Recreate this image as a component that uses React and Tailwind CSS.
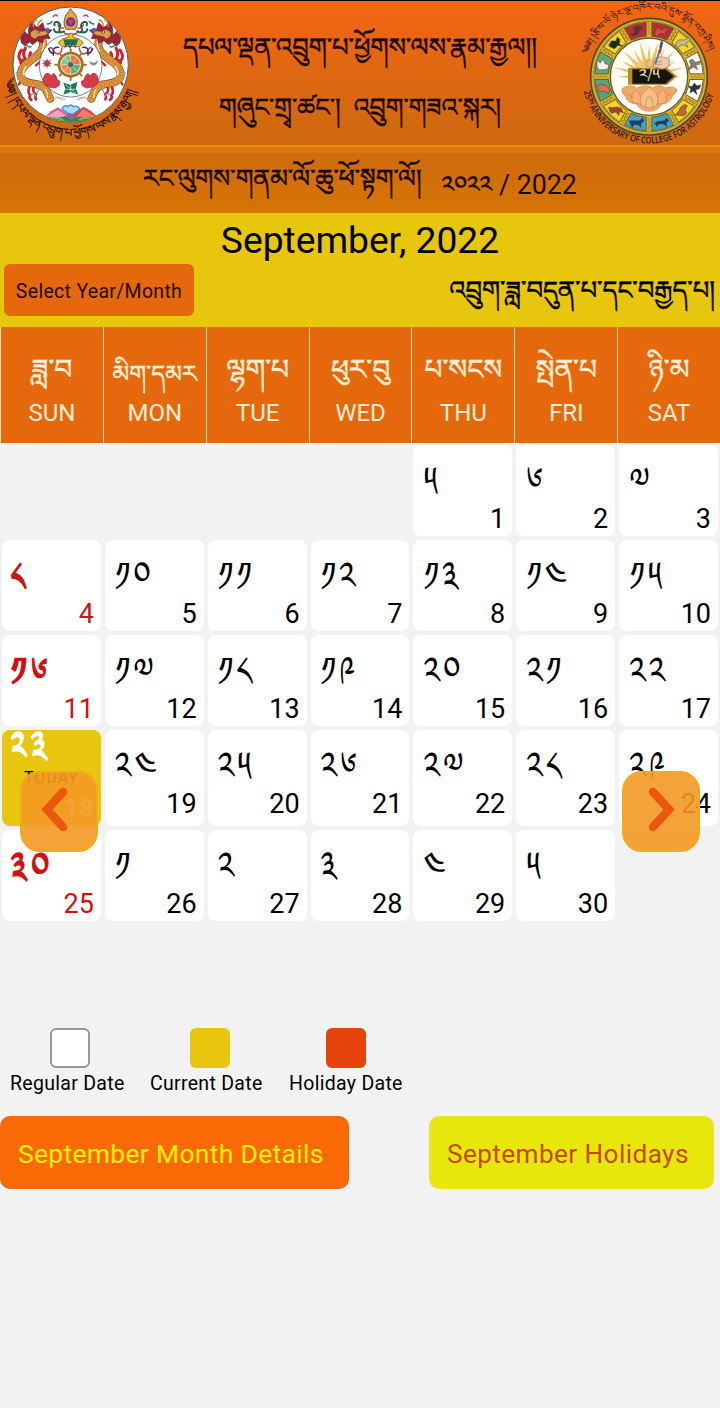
import React from "react";

const TIB = "font-['Noto_Serif_Tibetan','Noto_Sans_Tibetan','Jomolhari','DDC_Uchen','Roboto',serif]";

const WEEKDAYS = [
  ["ཟླ་བ", "SUN"],
  ["མིག་དམར", "MON"],
  ["ལྷག་པ", "TUE"],
  ["ཕུར་བུ", "WED"],
  ["པ་སངས", "THU"],
  ["སྤེན་པ", "FRI"],
  ["ཉི་མ", "SAT"],
];

const LUNAR = [
  "༥", "༦", "༧",
  "༨", "༡༠", "༡༡", "༡༢", "༡༣", "༡༤", "༡༥",
  "༡༦", "༡༧", "༡༨", "༡༩", "༢༠", "༢༡", "༢༢",
  "༢༣", "༢༤", "༢༥", "༢༦", "༢༧", "༢༨", "༢༩",
  "༣༠", "༡", "༢", "༣", "༤", "༥",
];

const DRAGON_BODY = "M118 104C136 126 130 150 112 166C90 184 66 196 62 218C58 244 86 250 106 252C130 254 140 270 150 296";

function Dragon() {
  return (
    <g fill="none" strokeLinecap="round" strokeLinejoin="round">
      <path d="M64 150q-14 20-2 32M76 144q-10 18 0 34q-20 6-12 12M92 158q-8 12 4 20" stroke="#d3222c" strokeWidth="9" />
      <path d="M108 196l16-14M128 150q18 8 10 30M66 240l-10 14" stroke="#d3222c" strokeWidth="7" />
      <path d={DRAGON_BODY} stroke="#8f4a1c" strokeWidth="24" />
      <path d={DRAGON_BODY} stroke="#e0973a" strokeWidth="20" />
      <path d={DRAGON_BODY} stroke="#b4672a" strokeWidth="15" strokeDasharray="1.5 6" strokeLinecap="butt" />
      <path d="M128 116q8 20-2 36M78 200q-10 12-6 24" stroke="#f5e2b4" strokeWidth="5" />
      <path d="M64 128q-6-24 8-40q4 14 14 16q-4-28 14-40q2 16 14 18l14-14 6 20 22 2-12 12 6 14-18-2-4 16-16-8-14 12-10-8-12 12z" fill="#9d2434" stroke="#6f1823" strokeWidth="2" />
      <path d="M92 96l14-8 16 6 18-2 4 9-12 6-16 2-12 8-12-8z" fill="#dba047" stroke="#7b3b1c" strokeWidth="2" />
      <path d="M100 80q-2-16 10-20M114 78q0-14 12-18" stroke="#d98c28" strokeWidth="4" />
      <circle cx="114" cy="96" r="4" fill="#fff" stroke="#222" strokeWidth="2" />
      <circle cx="142" cy="90" r="7" fill="#3c6fc4" />
      <path d="M142 72q10 0 14-8M78 130q4 14 16 10" stroke="#2d7a5a" strokeWidth="4" />
      <path d="M88 262q-6 14 2 24q-4 8 4 14M100 264q-2 14 8 18q-4 10 0 16" stroke="#d3222c" strokeWidth="8" />
      <path d="M94 284q10-8 14 4M120 260l-8 18M58 214l-10 6" stroke="#7aa5b5" strokeWidth="4" />
      <path d="M136 268q8 12 6 24" stroke="#f5e2b4" strokeWidth="4" />
    </g>
  );
}

function Scarf() {
  return (
    <g fill="none" strokeLinecap="round">
      <path d="M192 94q-16 8-14-6q8-16-6-22q-12-2-8 10M182 96q-20 4-20-8" stroke="#16684c" strokeWidth="6" />
      <path d="M190 84q-14 2-16-10M172 48q-8-8-12 2" stroke="#c92b3a" strokeWidth="4" />
      <path d="M186 144q-2 18-14 18q-12-4-14-16q-6-6-10 0q2 14 12 12" stroke="#c73148" strokeWidth="4" />
      <path d="M176 142q-14-2-16 10v14M146 146q6 16 16 14" stroke="#263878" strokeWidth="4" />
      <path d="M160 298q14-10 30-4M168 290l20 10q6 2 8-4" stroke="#a5a5a5" strokeWidth="2.5" />
    </g>
  );
}

function Rabbit() {
  return <path d="M132 228q4-10 14-8l8 8 6-8 8 8 4 12 8 4-2 12-12 8-18-2-12-6-8-12z" fill="#d93a4a" stroke="#a41d36" strokeWidth="2" />;
}

function DrukEmblem() {
  return (
    <svg viewBox="0 0 450 450" className="h-[150px] w-[150px] shrink-0">
      <defs>
        <path id="druk-arc" d="M15 238A200 200 0 0 0 412 228" />
        <clipPath id="druk-clip"><circle cx="212" cy="194" r="171" /></clipPath>
      </defs>
      <circle cx="212" cy="194" r="173" fill="#fff" stroke="#2f6a62" strokeWidth="3" />
      <g clipPath="url(#druk-clip)">
        <Dragon />
        <g transform="translate(424 0) scale(-1 1)"><Dragon /></g>
        <path d="M128 358l24-24 22-12 34 24 14 26z" fill="#e0608c" />
        <path d="M142 348l32-18 30 20 12 20h-40l-10-14z" fill="#f0a8bf" />
        <path d="M300 358l-28-26-22-12-34 26-12 26z" fill="#df3f49" />
        <path d="M288 350l-38-22-22 22-6 18z" fill="#ec7c70" />
        <path d="M186 328q6-16 18-8q8-10 16 0q12-6 20 8l-26 18z" fill="#a9dcf2" stroke="#3a8cc5" strokeWidth="4" />
        <path d="M190 350l22-12 24 30h-52z" fill="#8b62b2" />
        <path d="M126 370q14-24 46-16q30-10 42 8q14-18 44-8q30-8 44 16z" fill="#2d8b49" />
        <path d="M146 358q24-10 46 4M236 360q20-12 44-2" fill="none" stroke="#83bb3f" strokeWidth="5" />
      </g>
      <circle cx="212" cy="197" r="94" fill="#fff" stroke="#35435a" strokeWidth="2" />
      <Scarf />
      <g transform="translate(424 0) scale(-1 1)"><Scarf /></g>
      <path d="M186 92q26 20 52 0l-10 12h-32z" fill="#d8315a" />
      <path d="M212 26q6 10 14 18q12 24 0 44h-28q-12-20 0-44q8-8 14-18z" fill="#e8a13b" stroke="#9b5223" strokeWidth="3" />
      <circle cx="212" cy="66" r="14" fill="#5939ad" />
      <path d="M203 59h18l-9 19z" fill="#e23560" />
      <path d="M174 128q12-14 30-16l3-12h10l3 12q20 2 30 16l-12 12h-52z" fill="#e8c22a" stroke="#9d761b" strokeWidth="3" />
      <path d="M190 118h44l-4 16h-36z" fill="#18795d" />
      <path d="M194 142l8-12 8 12 8-12 10 12" stroke="#1e4d90" strokeWidth="4" fill="none" />
      <path d="M212 148v92M166 194h92M179 161l66 66M179 227l66-66" stroke="#a57526" strokeWidth="6" strokeLinecap="round" />
      <circle cx="212" cy="194" r="35" fill="#f7dfc3" stroke="#a86e28" strokeWidth="8" />
      <path d="M212 194V166A28 28 0 0 1 240 194z" fill="#e8784a" />
      <path d="M212 194H240A28 28 0 0 1 212 222z" fill="#58ad84" />
      <path d="M212 194V222A28 28 0 0 1 184 194z" fill="#ef8554" />
      <path d="M212 194H184A28 28 0 0 1 212 166z" fill="#7fc79c" />
      <path d="M212 164v60M182 194h60M191 173l42 42M191 215l42-42" stroke="#f3dfae" strokeWidth="2" />
      <circle cx="212" cy="194" r="9" fill="#2864a5" stroke="#d4ac3b" strokeWidth="3" />
      <path d="M141 174l3 9 9-4-5 8 9 3-9 3 5 7-9-3-3 9-3-9-9 3 5-7-9-3 9-3-5-8 9 4z" fill="#b33e45" />
      <path d="M269 182a12 12 0 1 0 23-2a13 13 0 0 1-23 2" fill="#8a8a8a" />
      <Rabbit />
      <g transform="translate(424 0) scale(-1 1)"><Rabbit /></g>
      <path d="M190 248l20 6 22-8-4 18 6 20-22-8-22 8 6-18z" fill="#1a795d" />
      <path d="M212 246v44M190 268h44M196 254l32 26" stroke="#e9f4ec" strokeWidth="2" />
      <text className={TIB} fontSize="33" fill="#170804" stroke="#170804" strokeWidth="0.6">
        <textPath href="#druk-arc" textLength="535" lengthAdjust="spacingAndGlyphs">༄༅། །དཔལ་ལྡན་འབྲུག་པ་ཕྱོགས་ལས་རྣམ་རྒྱལ།།</textPath>
      </text>
    </svg>
  );
}

const ZODIAC = [
  { a: 15, bg: "#b52c3e", c: "#d9483f", p: "M-20 8l8-18 14 8 14-8 4 10-8 4 2 14-9-10-12 2-7 9z" },
  { a: 45, bg: "#efd527", c: "#c9b98e", p: "M-22 5l10-14 18 0 12-8 5 9-13 9 6 12-14-8-12 4-6 8z" },
  { a: 75, bg: "#fff", c: "#8d7d68", p: "M-18-10l10-6 8 10 18-4-4 10-12 2 6 14-12-8-14 8 6-16z" },
  { a: 105, bg: "#fff", c: "#27353f", p: "M-20-8l12 0 6-10 8 8 12-2-6 12-10 2 4 15-12-11-9 6 2-12z" },
  { a: 135, bg: "#efd527", c: "#be662a", p: "M14-14l-8-4-12 8-8 16-10 8 28 2 8-8-4-10z" },
  { a: 165, bg: "#3aa3cf", c: "#263a4e", p: "M-22 4l10-8 22-2 4-8 9 8-9 6 2 12-8-8-16 0-6 8-2-9z" },
  { a: 195, bg: "#3aa3cf", c: "#244165", p: "M-22-6l10 0 20 0 10-8 4 10-8 4-2 14-7-8-14 0-4 9-5-10z" },
  { a: 225, bg: "#efd527", c: "#ad3d26", p: "M-20-10l10 2 16-2 12 4 6 14-10-5-4 12-8-10-14 4-5-8z" },
  { a: 255, bg: "#51a682", c: "#e66a4b", p: "M-20-8l12-6 14 2 14 12-4 14-12-7-20 0 3-10z" },
  { a: 285, bg: "#55aa83", c: "#f1eee6", p: "M-18-12l10 8 8-12 6 14 12 3-4 14-26 2-6-10z" },
  { a: 315, bg: "#edd326", c: "#1f2b21", p: "M-20 8l8-14 14 0 4-12 8 8-2 13 10 7-14-3-10 10-8-3z" },
  { a: 345, bg: "#b52c3e", c: "#5f2c38", p: "M-20 8q10 8 14-4t-6-8q12-12 24-8l6 8-12-2q4 20-10 20q-10 2-14-3z" },
];

function wedge(a) {
  const pt = (r, d) => {
    const t = ((d - 90) * Math.PI) / 180;
    return `${237 + r * Math.cos(t)} ${230 + r * Math.sin(t)}`;
  };
  return `M${pt(163, a - 12)}A163 163 0 0 1 ${pt(163, a + 12)}L${pt(122, a + 11)}A122 122 0 0 0 ${pt(122, a - 11)}Z`;
}

function AstrologyEmblem() {
  return (
    <svg viewBox="0 0 450 450" className="h-[150px] w-[150px] shrink-0">
      <defs>
        <path id="ast-top" d="M52 164A194 194 0 0 1 422 164" />
        <path id="ast-bottom" d="M41 274A201 201 0 0 0 433 274" />
      </defs>
      <circle cx="237" cy="230" r="175" fill="#d6ad32" stroke="#4c4a2c" strokeWidth="5" />
      <circle cx="237" cy="230" r="166" fill="#d9b431" stroke="#806720" strokeWidth="2" />
      {ZODIAC.map((z) => {
        const t = ((z.a - 90) * Math.PI) / 180;
        return (
          <g key={z.a}>
            <path d={wedge(z.a)} fill={z.bg} stroke="#775d18" strokeWidth="3" />
            <path d={z.p} transform={`translate(${237 + 143 * Math.cos(t)} ${230 + 143 * Math.sin(t)})`} fill={z.c} stroke="#493e31" strokeWidth="1.5" />
            <path d="M-4-17l8 6-8 6 8 6-8 6 8 6-8 6" transform={`rotate(${z.a + 15} 237 230) translate(237 86)`} fill="none" stroke="#8b701c" strokeWidth="2" />
          </g>
        );
      })}
      <circle cx="237" cy="230" r="116" fill="#fffdf6" stroke="#6b5a2a" strokeWidth="4" />
      <g fill="#ecc56a">
        {[-90, -75, -60, -45, -30, -15, 0, 15, 30, 45, 60, 75, 90].map((a, i) => (
          <path key={a} d={i % 2 ? "M227 215L237 120L247 215Z" : "M227 215L237 136L247 215Z"} transform={`rotate(${a} 237 230)`} />
        ))}
      </g>
      <g fill="#f0a866" stroke="#cf7f50" strokeWidth="2">
        <path d="M156 266q24-16 44-2q30-14 48 0q20-14 38 0q22-8 34 4q0 12-12 18q-6 24-30 24q-16 24-40 24q-26 0-38-22q-30-2-34-24q-12-8-10-22z" />
        <path d="M190 308q-12-24 6-38q20 14 20 44zM262 312q-2-30 16-42q20 12 8 40z" fill="#f3b377" />
        <path d="M214 316q-14-32 24-54q36 22 22 54q-22 16-46 0z" fill="#f6bf88" />
        <path d="M168 284q12-4 22 10M304 284q-12-4-20 10M226 322q0-24 12-34q12 10 10 34" fill="none" />
      </g>
      <path d="M174 204h118l29 25-29 25H174z" fill="#b78c2b" />
      <path d="M188 208h98l25 21-25 22h-98z" fill="#161411" stroke="#493411" strokeWidth="3" />
      <path d="M250 180q14-14 36-8l13 6-3 22-20 8-26-9z" fill="#eec7b0" stroke="#a87658" strokeWidth="2" />
      <path d="M252 185h24M254 193h22" stroke="#b5815e" strokeWidth="2" />
      <path d="M274 138l-18 52" stroke="#5a7fa5" strokeWidth="6" strokeLinecap="round" />
      <path d="M275 128l-3 14" stroke="#31577b" strokeWidth="8" strokeLinecap="round" />
      <path d="M272 146l-5 14" stroke="#c94036" strokeWidth="8" />
      <path d="M240 178q-16 2-12 16q6 12 18 6l-4 14" fill="none" stroke="#d5a45a" strokeWidth="4" />
      <text x="206" y="238" className={TIB} fontSize="42" fill="#f4eaa8" textLength="64" lengthAdjust="spacingAndGlyphs">༢/༥</text>
      <text className={TIB} fontSize="26" fill="#271207">
        <textPath href="#ast-top" textLength="478" lengthAdjust="spacingAndGlyphs">༄༅། །རྩིས་ལོ་ཉེར་ལྔ་འཁོར་བའི་དུས་སྟོན་བཀྲ་ཤིས།</textPath>
      </text>
      <text className="font-['Open_Sans',sans-serif] font-semibold" fontSize="28" fill="#32190b">
        <textPath href="#ast-bottom" textLength="532" lengthAdjust="spacingAndGlyphs">25ᵀᴴ ANNIVERSARY OF COLLEGE FOR ASTROLOGY</textPath>
      </text>
    </svg>
  );
}

function DayCell({ day }) {
  const sunday = day % 7 === 4;
  if (day === 18) {
    return (
      <div className="m-[2px] flex flex-col rounded-lg bg-[#e7c60d] text-white">
        <span className={`${TIB} h-9 scale-y-130 pl-2 text-[32px] font-bold leading-[51px] tracking-[3px]`}>{LUNAR[day - 1]}</span>
        <span className="text-center text-[16px] leading-6 tracking-[1px] text-black">TODAY</span>
        <span className="pr-[7px] text-right text-[26px] font-bold leading-9">18</span>
      </div>
    );
  }
  return (
    <div className={`m-[2px] flex flex-col rounded-lg bg-white ${sunday ? "text-[#d01212]" : "text-black"}`}>
      <span className={`${TIB} h-[57px] scale-y-130 text-[32px] leading-[88px] tracking-[3px] ${sunday ? "pl-2 font-bold" : "pl-[10px]"}`}>{LUNAR[day - 1]}</span>
      <span className="pr-[7px] text-right text-[27px] leading-[34px]">{day}</span>
    </div>
  );
}

function ArrowButton({ right }) {
  return (
    <button className={`absolute top-[328px] flex h-[81px] w-[78px] items-center justify-center rounded-[20px] border-2 border-[#f5a81a] bg-[#f39924]/90 ${right ? "left-[622px]" : "left-[20px]"}`}>
      <svg viewBox="0 0 78 81" className="h-[81px] w-[78px] shrink-0" fill="none" stroke="#ec560e" strokeWidth="8.5" strokeLinecap="round" strokeLinejoin="miter">
        <path d={right ? "M31 21L47 38.5L31 56" : "M43 21L27 38.5L43 56"} />
      </svg>
    </button>
  );
}

function Legend({ label, swatch, width }) {
  return (
    <div className={`flex flex-col items-center ${width}`}>
      <div className={`h-10 w-10 rounded-md ${swatch}`} />
      <span className="mt-1 self-start whitespace-nowrap text-[19.5px] leading-6 tracking-[0.3px]">{label}</span>
    </div>
  );
}

export default function App() {
  return (
    <div className="h-[1408px] w-[720px] overflow-hidden bg-[#f2f2f2] font-['Roboto',sans-serif] text-black">
      <header className="flex h-[145px] items-start overflow-hidden border-t border-black bg-linear-to-b from-[#f46514] to-[#cd690f]">
        <div className="-mt-px flex"><DrukEmblem /></div>
        <div className={`${TIB} flex flex-1 flex-col items-center whitespace-nowrap text-[#180800] [-webkit-text-stroke:0.5px_#180800]`}>
          <div className="mt-[29px] h-[62px] text-[25.7px] leading-[50px]">དཔལ་ལྡན་འབྲུག་པ་ཕྱོགས་ལས་རྣམ་རྒྱལ།།</div>
          <div className="whitespace-pre text-[25.2px] leading-[46px]">གཞུང་གྲྭ་ཚང་།  འབྲུག་གཟའ་སྐར།</div>
        </div>
        <div className="-mt-px flex"><AstrologyEmblem /></div>
      </header>

      <div className="flex h-[68px] items-center justify-center border-t-2 border-[#ee8a17] bg-[linear-gradient(to_bottom,#d87907_0,#d87907_6px,#ce6b0c_6px,#d77405_100%)] pt-[11px] text-[#180800]">
        <span className={`${TIB} mr-5 whitespace-pre text-[25.2px] [-webkit-text-stroke:0.5px_#180800]`}>རང་ལུགས་གནམ་ལོ་ཆུ་ཕོ་སྟག་ལོ།</span>
        <span className={`${TIB} mr-[7px] mt-3 text-[24px] [-webkit-text-stroke:0.4px_#180800]`}>༢༠༢༢</span>
        <span className="-mt-px text-[26.8px]">/ 2022</span>
      </div>

      <section className="flex h-[114px] flex-col bg-[#e7c60d]">
        <h1 className="h-[51px] text-center text-[37.2px] leading-[55px]">September, 2022</h1>
        <div className="flex items-center justify-between pl-1 pr-[5px]">
          <button className="h-[52px] w-[190px] rounded-md bg-[#e6680c] pt-[3px] text-[19.5px] tracking-[0.3px] text-[#240800]">Select Year/Month</button>
          <span className={`${TIB} mt-4 h-9 whitespace-nowrap text-[25.8px] leading-9 [-webkit-text-stroke:0.5px_black]`}>འབྲུག་ཟླ་བདུན་པ་དང་བརྒྱད་པ།</span>
        </div>
      </section>

      <div className="grid h-[116px] grid-cols-7 bg-[#e6680c] text-[#ffeed5]">
        {WEEKDAYS.map(([tib, en]) => (
          <div key={en} className="flex flex-col items-center border-l border-[#f8ddb6] pt-[18px]">
            <span className={`${TIB} h-[50px] whitespace-nowrap [-webkit-text-stroke:0.5px_#ffeed5] ${en === "MON" ? "text-[24px] leading-[72px]" : "text-[28px] leading-[66px]"}`}>{tib}</span>
            <span className="text-[24px] leading-9">{en}</span>
          </div>
        ))}
      </div>

      <main className="relative">
        <div className="grid grid-cols-7 grid-rows-[95px_95px_95px_100px_95px]">
          <div className="col-span-4" />
          {LUNAR.map((_, i) => <DayCell key={i} day={i + 1} />)}
        </div>
        <ArrowButton />
        <ArrowButton right />
      </main>

      <div className="mt-[105px] flex gap-[20px] pl-[10px]">
        <Legend label="Regular Date" width="w-[120px]" swatch="border-2 border-[#999] bg-white" />
        <Legend label="Current Date" width="w-[120px]" swatch="bg-[#e7c60d]" />
        <Legend label="Holiday Date" width="-ml-px w-[114px]" swatch="bg-[#e6420c]" />
      </div>

      <div className="mt-5 flex justify-between pr-[6px]">
        <button className="h-[73px] w-[349px] rounded-[10px] border-2 border-[#ee6b13] bg-[#f96a06] pl-4 pt-[4px] text-left text-[26.3px] tracking-[0.4px] text-[#fff200]">September Month Details</button>
        <button className="h-[73px] w-[285px] rounded-[10px] border-2 border-[#e8e420] bg-[#e7e70b] pl-4 pt-[4px] text-left text-[26.2px] tracking-[0.4px] text-[#c44b0b]">September Holidays</button>
      </div>
    </div>
  );
}
